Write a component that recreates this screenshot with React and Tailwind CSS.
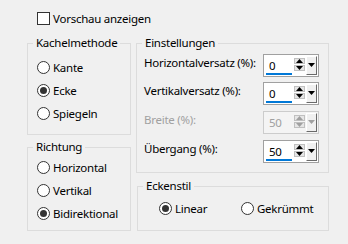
import React from "react";

function Radio({ checked, label }) {
  return (
    <div className="flex items-center gap-[3px] h-[23px]">
      <span className="w-[13px] h-[13px] rounded-full border border-[#333] bg-white flex items-center justify-center">
        {checked && <span className="w-[7px] h-[7px] rounded-full bg-[#333]" />}
      </span>
      <span>{label}</span>
    </div>
  );
}

function Group({ title, className, children }) {
  return (
    <div className={`relative border border-[#dcdcdc] ${className}`}>
      <span className="absolute -top-[9px] left-[5px] px-[3px] bg-[#f0f0f0] leading-[16px] whitespace-nowrap">
        {title}
      </span>
      {children}
    </div>
  );
}

function Arrow({ up, color }) {
  return (
    <svg width="7" height="4" viewBox="0 0 7 4" className="block">
      {up ? (
        <polygon points="0,4 7,4 3.5,0" fill={color} />
      ) : (
        <polygon points="0,0 7,0 3.5,4" fill={color} />
      )}
    </svg>
  );
}

function Spin({ value, disabled }) {
  const arrow = disabled ? "#a0a0a0" : "#000";
  return (
    <div
      className={`w-[56px] h-[23px] border flex p-[1px] ${
        disabled ? "border-[#cccccc] bg-[#f4f4f4]" : "border-[#a0a0a0] bg-white"
      }`}
    >
      <div className="w-[28px] flex flex-col pl-[1px]">
        <span className={`h-[17px] leading-[17px] pl-[3px] pt-[1px] ${disabled ? "text-[#a0a0a0]" : ""}`}>
          {value}
        </span>
        {!disabled && <div className="h-[3px] w-[26px] bg-[#0078d7]" />}
      </div>
      <div className="flex flex-col ml-[2px] mt-[2px] gap-[1px]">
        <div className="w-[11px] h-[6px] bg-[#e6e6e6] border border-[#c0c0c0] flex items-center justify-center">
          <Arrow up color={arrow} />
        </div>
        <div className="w-[11px] h-[6px] bg-[#e6e6e6] border border-[#c0c0c0] flex items-center justify-center">
          <Arrow color={arrow} />
        </div>
      </div>
      <div className="ml-[1px] w-[11px] h-[19px] bg-[#f0f0f0] border-l border-t border-l-white border-t-white border-r border-b border-r-[#6a6a6a] border-b-[#6a6a6a] flex justify-center pt-[6px]">
        <Arrow color={arrow} />
      </div>
    </div>
  );
}

function Row({ label, value, disabled, className }) {
  return (
    <div className={`flex items-center justify-between h-[23px] ${className || ""}`}>
      <span className={`-mt-[5px] whitespace-nowrap ${disabled ? "text-[#a0a0a0]" : ""}`}>{label}</span>
      <Spin value={value} disabled={disabled} />
    </div>
  );
}

export default function App() {
  return (
    <div className="w-[348px] h-[244px] bg-[#f0f0f0] text-black text-[11.5px] tracking-[-0.25px] font-['Noto_Sans',sans-serif] leading-[16px]">
      <div className="pl-[37px] pt-[12px] flex items-center gap-[3px] h-[25px]">
        <span className="w-[13px] h-[13px] border border-[#333] bg-white" />
        <span>Vorschau anzeigen</span>
      </div>

      <div className="flex pl-[27px] mt-[18px]">
        <div className="flex flex-col w-[104px]">
          <Group title="Kachelmethode" className="h-[92px] pl-[9px] pt-[12px]">
            <Radio label="Kante" />
            <Radio label="Ecke" checked />
            <Radio label="Spiegeln" />
          </Group>
          <Group title="Richtung" className="h-[84px] mt-[12px] pl-[9px] pt-[8px]">
            <Radio label="Horizontal" />
            <Radio label="Vertikal" />
            <Radio label="Bidirektional" checked />
          </Group>
        </div>

        <div className="flex flex-col w-[193px] ml-[5px]">
          <Group title="Einstellungen" className="h-[130px] pl-[7px] pr-[9px] pt-[10px]">
            <Row label="Horizontalversatz (%):" value="0" />
            <Row label="Vertikalversatz (%):" value="0" className="mt-[5px]" />
            <Row label="Breite (%):" value="50" disabled className="mt-[6px]" />
            <Row label="Übergang (%):" value="50" className="mt-[6px]" />
          </Group>
          <Group title="Eckenstil" className="h-[45px] mt-[13px] ml-[1px] pl-[21px] pt-[10px]">
            <div className="flex">
              <div className="w-[82px]">
                <Radio label="Linear" checked />
              </div>
              <Radio label="Gekrümmt" />
            </div>
          </Group>
        </div>
      </div>
    </div>
  );
}
